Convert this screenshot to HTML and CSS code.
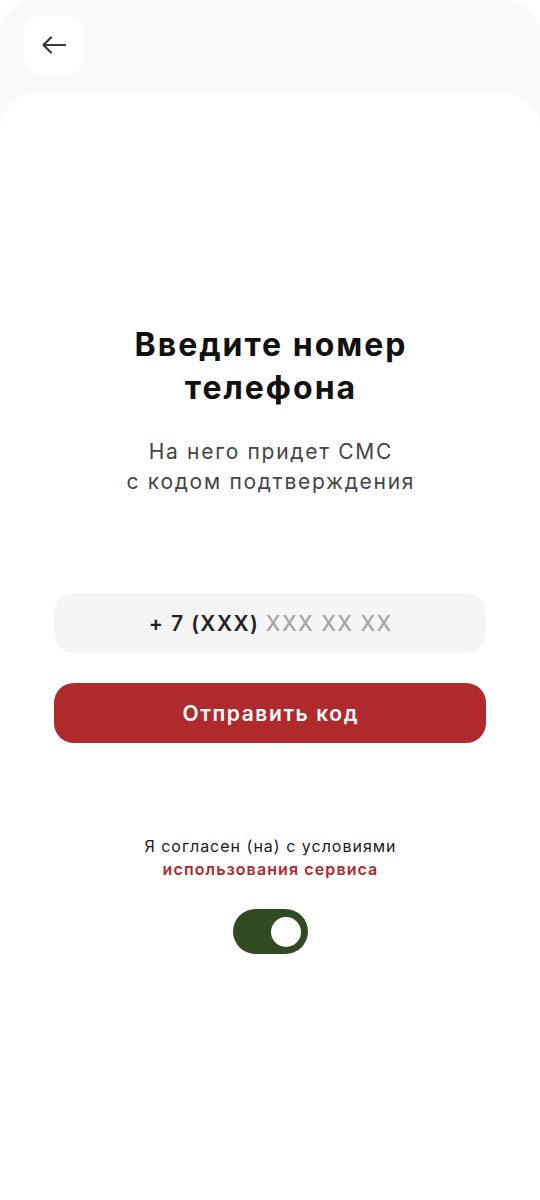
FILE: index.html
```html
<!DOCTYPE html>
<html lang="ru">
<head>
<meta charset="utf-8">
<link rel="stylesheet" href="styles.css">
</head>
<body>
<div class="screen">
  <header class="topbar">
    <button class="back" aria-label="Назад">
      <svg width="24" height="24" viewBox="0 0 24 24" fill="none" stroke="#3a3a3a" stroke-width="2.2" stroke-linecap="round" stroke-linejoin="round"><path d="M23 12H2M9 4.5L1.5 12 9 19.5"/></svg>
    </button>
  </header>
  <main class="card">
    <h1 class="title">Введите номер<br>телефона</h1>
    <p class="subtitle">На него придет СМС<br>с кодом подтверждения</p>
    <div class="phone"><span class="prefix">+ 7 (XXX)</span>&nbsp;<span class="mask">XXX XX XX</span></div>
    <button class="send">Отправить код</button>
    <p class="agree">Я согласен (на) с условиями<br><a class="link" href="#">использования сервиса</a></p>
    <div class="toggle"><span class="knob"></span></div>
  </main>
</div>
</body>
</html>
```

FILE: styles.css
```css
* { box-sizing: border-box; }
html, body { margin: 0; padding: 0; background: #ffffff; }
body { font-family: Inter, "Noto Sans", sans-serif; }
.screen {
  width: 540px;
  height: 1200px;
  background: #f9f9f9;
  border-radius: 36px 36px 0 0;
  display: flex;
  flex-direction: column;
  overflow: hidden;
}
.topbar {
  height: 93px;
  padding: 15px 0 0 24px;
  flex-shrink: 0;
}
.back {
  width: 60px;
  height: 60px;
  border: none;
  border-radius: 18px;
  background: #ffffff;
  display: flex;
  align-items: center;
  justify-content: center;
  padding: 0;
  margin: 0;
}
.card {
  flex: 1;
  background: #ffffff;
  border-radius: 36px 36px 0 0;
  display: flex;
  flex-direction: column;
  align-items: center;
  padding: 230px 54px 0;
}
.title {
  margin: 0;
  font-size: 32px;
  line-height: 43px;
  font-weight: 700;
  color: #111111;
  text-align: center;
  letter-spacing: 2px;
  padding-left: 2px;
}
.subtitle {
  margin: 28px 0 0;
  font-size: 21px;
  line-height: 30px;
  font-weight: 400;
  color: #444444;
  text-align: center;
  letter-spacing: 1.7px;
  padding-left: 1.7px;
}
.phone {
  margin-top: 96px;
  width: 100%;
  height: 60px;
  border-radius: 20px;
  background: #f5f5f5;
  display: flex;
  align-items: center;
  justify-content: center;
  font-size: 21px;
  font-weight: 600;
  letter-spacing: 1.4px;
  padding-left: 1.4px;
}
.prefix { color: #222222; }
.mask { color: #a6a6a6; font-weight: 500; }
.send {
  margin-top: 30px;
  width: 100%;
  height: 60px;
  border: none;
  border-radius: 20px;
  background: #b0292c;
  color: #ffffff;
  font-family: inherit;
  font-size: 21px;
  font-weight: 600;
  letter-spacing: 1.6px;
  padding: 0 0 0 1.6px;
}
.agree {
  margin: 92px 0 0;
  font-size: 16px;
  line-height: 23px;
  color: #1a1a1a;
  text-align: center;
  letter-spacing: 1px;
  padding-left: 1px;
}
.link {
  color: #b0292c;
  font-weight: 600;
  text-decoration: none;
  letter-spacing: 1.1px;
}
.toggle {
  margin-top: 28px;
  width: 75px;
  height: 45px;
  border-radius: 23px;
  background: #304a22;
  display: flex;
  align-items: center;
  justify-content: flex-end;
  padding-right: 7px;
}
.knob {
  width: 30px;
  height: 30px;
  border-radius: 50%;
  background: #ffffff;
}
```
